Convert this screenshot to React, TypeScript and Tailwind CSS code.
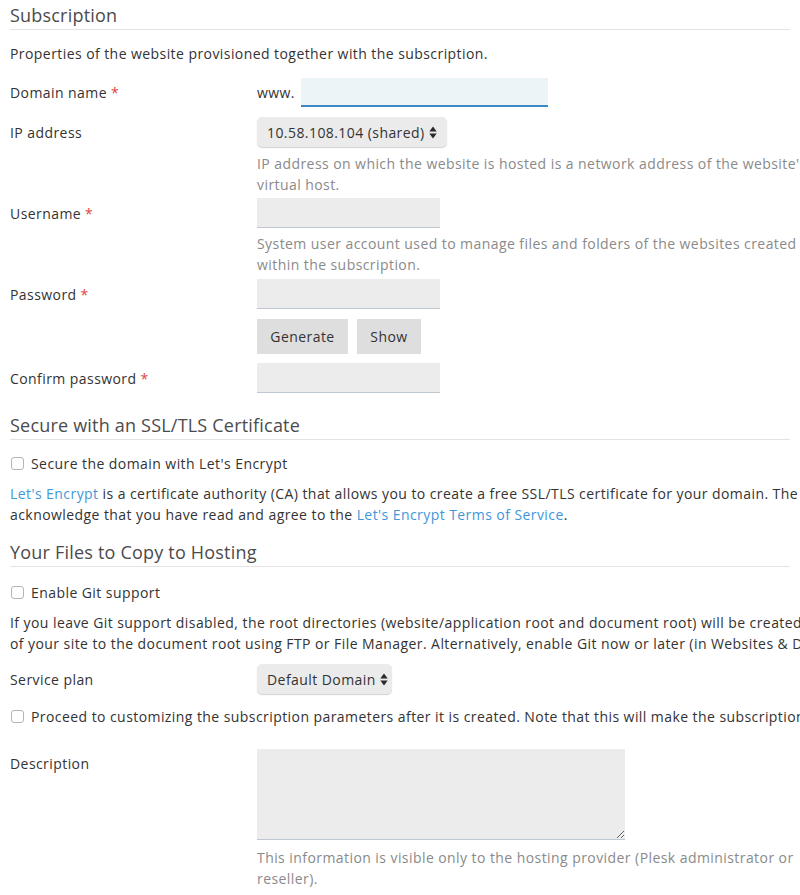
import type { ReactNode } from 'react'

const font = { fontFamily: '"Open Sans", "Noto Sans", sans-serif' }

function Heading({ children, className = '' }: { children: ReactNode; className?: string }) {
  return (
    <h2 className={`border-b border-[#e3e3e3] pt-[2px] pb-[2px] text-[18px] font-normal leading-[24px] tracking-[0.2px] text-[#4b4b4b] ${className}`}>
      {children}
    </h2>
  )
}

function Required() {
  return <span className="ml-[4px] text-[#e0443e]">*</span>
}

function Label({ children, required }: { children: ReactNode; required?: boolean }) {
  return (
    <div className="w-[247px] shrink-0 text-[#333]">
      {children}
      {required && <Required />}
    </div>
  )
}

function TextInput({ width = 'w-[183px]' }: { width?: string }) {
  return <input type="text" className={`${width} h-[30px] border-0 border-b border-[#bfc8d1] bg-[#ececec] px-2 outline-none`} />
}

function Arrows() {
  return (
    <svg width="8" height="13" viewBox="0 0 8 13" className="ml-[4px]">
      <path d="M0.3 5.4 L4 0.6 L7.7 5.4 Z" fill="#2b2b2b" />
      <path d="M0.3 7.6 L7.7 7.6 L4 12.4 Z" fill="#2b2b2b" />
    </svg>
  )
}

function Select({ value, width }: { value: string; width: string }) {
  return (
    <button
      type="button"
      className={`${width} flex h-[30px] items-center rounded-[5px] bg-[#ebebeb] pl-[10px] text-[#333] shadow-[0_1px_1px_rgba(0,0,0,0.18)]`}
    >
      <span>{value}</span>
      <Arrows />
    </button>
  )
}

function Hint({ children, className = '' }: { children: ReactNode; className?: string }) {
  return <div className={`whitespace-nowrap pl-[247px] text-[#8a8a8a] ${className}`}>{children}</div>
}

function Checkbox({ children, className = '' }: { children: ReactNode; className?: string }) {
  return (
    <label className={`flex items-center whitespace-nowrap text-[#333] ${className}`}>
      <span className="ml-[1px] mr-[7px] box-border h-[13px] w-[13px] shrink-0 rounded-[3px] border border-[#b5b5b5] bg-white" />
      {children}
    </label>
  )
}

function Link({ children }: { children: ReactNode }) {
  return <a className="text-[#3f97da]">{children}</a>
}

export default function App() {
  return (
    <div className="w-[800px] overflow-hidden bg-white px-[10px] pt-[1px] text-[14px] leading-[21px] tracking-[0.43px]" style={font}>
      <Heading>Subscription</Heading>

      <p className="mt-[13px] whitespace-nowrap text-[#333]">Properties of the website provisioned together with the subscription.</p>

      <div className="mt-[14px] flex items-center">
        <Label required>Domain name</Label>
        <span className="text-[#333]">www.</span>
        <input
          type="text"
          className="ml-[6px] h-[29px] w-[247px] border-0 border-b-2 border-[#3d89c4] bg-[#edf4f8] px-2 outline-none"
        />
      </div>

      <div className="mt-[10px] flex items-center">
        <Label>IP address</Label>
        <Select value="10.58.108.104 (shared)" width="w-[190px]" />
      </div>
      <Hint className="mt-[6px]">
        IP address on which the website is hosted is a network address of the website's
        <br />
        virtual host.
      </Hint>

      <div className="mt-[3px] flex items-center">
        <Label required>Username</Label>
        <TextInput />
      </div>
      <Hint className="mt-[5px]">
        System user account used to manage files and folders of the websites created
        <br />
        within the subscription.
      </Hint>

      <div className="mt-[4px] flex items-center">
        <Label required>Password</Label>
        <TextInput />
      </div>
      <div className="mt-[10px] flex gap-[9px] pl-[247px]">
        <button type="button" className="h-[35px] w-[91px] bg-[#dedede] text-[#333]">Generate</button>
        <button type="button" className="h-[35px] w-[64px] bg-[#dedede] text-[#333]">Show</button>
      </div>

      <div className="mt-[9px] flex items-center">
        <Label required>Confirm password</Label>
        <TextInput />
      </div>

      <Heading className="mt-[18px]">Secure with an SSL/TLS Certificate</Heading>

      <Checkbox className="mt-[13px]">Secure the domain with Let's Encrypt</Checkbox>

      <p className="mt-[9px] whitespace-nowrap text-[#333]">
        <Link>Let's Encrypt</Link> is a certificate authority (CA) that allows you to create a free SSL/TLS certificate for your domain. The certificate is issued automatically. By proceeding you
        <br />
        acknowledge that you have read and agree to the <Link>Let's Encrypt Terms of Service</Link>.
      </p>

      <Heading className="mt-[13px]">Your Files to Copy to Hosting</Heading>

      <Checkbox className="mt-[15px]">Enable Git support</Checkbox>

      <p className="mt-[9px] whitespace-nowrap text-[#333]">
        If you leave Git support disabled, the root directories (website/application root and document root) will be created automatically. You can upload the content
        <br />
        of your site to the document root using FTP or File Manager. Alternatively, enable Git now or later (in Websites &amp; Domains) to deploy your site from a repository.
      </p>

      <div className="mt-[10px] flex items-center">
        <Label>Service plan</Label>
        <Select value="Default Domain" width="w-[135px]" />
      </div>

      <Checkbox className="mt-[12px]">
        Proceed to customizing the subscription parameters after it is created. Note that this will make the subscription locked from syncing with the plan.
      </Checkbox>

      <div className="mt-[22px] flex items-start">
        <div className="pt-[4px]">
          <Label>Description</Label>
        </div>
        <textarea className="block h-[91px] w-[368px] border-0 border-b border-[#bfc8d1] bg-[#ececec] p-2 outline-none" />
      </div>
      <Hint className="mt-[7px] pb-[6px]">
        This information is visible only to the hosting provider (Plesk administrator or
        <br />
        reseller).
      </Hint>
    </div>
  )
}
